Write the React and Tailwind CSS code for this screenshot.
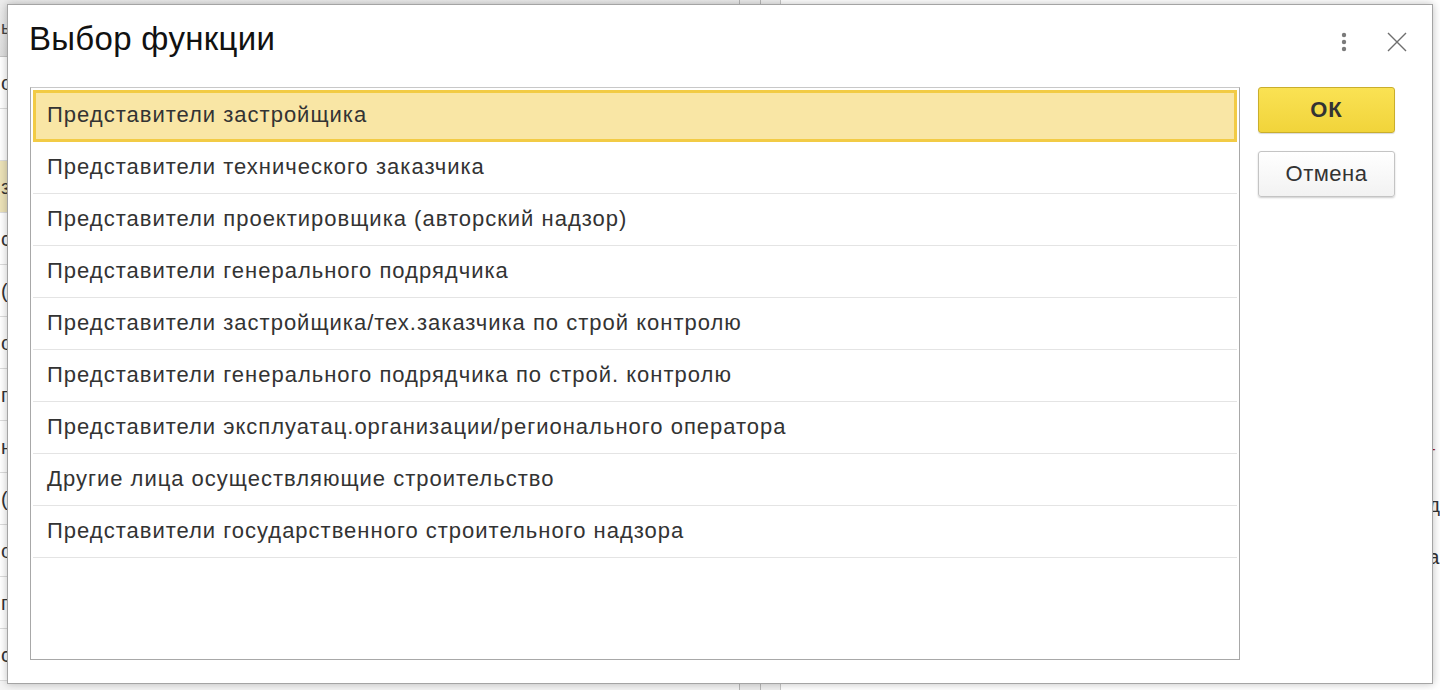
import { useState } from 'react'

const functions = [
  'Представители застройщика',
  'Представители технического заказчика',
  'Представители проектировщика (авторский надзор)',
  'Представители генерального подрядчика',
  'Представители застройщика/тех.заказчика по строй контролю',
  'Представители генерального подрядчика по строй. контролю',
  'Представители эксплуатац.организации/регионального оператора',
  'Другие лица осуществляющие строительство',
  'Представители государственного строительного надзора'
]

// fragments of the form behind the dialog, only their first letters peek out
const backRows = ['о', '', 'з', 'с', '(', 'о', 'г', 'н', '(', 'о', 'г', 'с']
const rightRows = [
  { text: 'г', red: true },
  { text: 'д', red: false },
  { text: 'а', red: false }
]

const Background = () => (
  <div className="flex h-[690px] w-[1440px] bg-[#f4f4f4]">
    <div className="flex w-[744px] flex-col border-r border-[#b8b8b8]">
      <div className="flex h-[57px] items-center border-b border-[#c4c4c4] bg-gradient-to-b from-[#ececec] to-[#dedede] pl-[1px] text-[18px] text-[#444]">
        ыы
      </div>
      {backRows.map((t, i) => (
        <div
          key={i}
          className={
            'flex h-[52px] items-center border-b border-[#dcdcdc] pl-[1px] text-[20px] text-[#333] ' +
            (i === 2 ? 'bg-[#ece2b8]' : 'bg-white')
          }
        >
          {t}
        </div>
      ))}
    </div>
    <div className="w-[22px] border-r border-[#b8b8b8] bg-[#ececec]"></div>
    <div className="w-[20px] border-r border-[#c8c8c8] bg-[#f0f0f0]"></div>
    <div className="flex flex-1 flex-col bg-white pt-[438px] pl-[647px]">
      {rightRows.map((r) => (
        <div
          key={r.text}
          className={'h-[52px] text-[20px] ' + (r.red ? 'text-[#a02020]' : 'text-[#333]')}
        >
          {r.text}
        </div>
      ))}
    </div>
  </div>
)

const Kebab = () => (
  <svg width="8" height="22" viewBox="0 0 8 22">
    <circle cx="4" cy="4" r="2.2" fill="#7a7a7a" />
    <circle cx="4" cy="11" r="2.2" fill="#7a7a7a" />
    <circle cx="4" cy="18" r="2.2" fill="#7a7a7a" />
  </svg>
)

const Close = () => (
  <svg width="20" height="20" viewBox="0 0 20 20">
    <path d="M1 1 L19 19 M19 1 L1 19" stroke="#6e6e6e" strokeWidth="1.4" fill="none" />
  </svg>
)

const App = () => {
  const [selected, setSelected] = useState(0)

  return (
    <div className="relative h-[690px] w-[1440px] overflow-hidden font-['Liberation_Sans',Arial,sans-serif]">
      <Background />

      {/* Dialog */}
      <div className="absolute top-[4px] left-[7px] flex h-[680px] w-[1426px] flex-col border border-[#a4a4a4] bg-white shadow-[0_0_8px_rgba(0,0,0,0.25)]">
        <div className="flex h-[82px] items-start justify-between pt-[15px] pl-[21px] pr-[24px]">
          <h1 className="text-[33px] leading-[38px] tracking-[0.3px] text-[#111]">Выбор функции</h1>
          <div className="flex items-center gap-[37px] pt-[10px]">
            <button className="flex h-[24px] w-[10px] items-center justify-center">
              <Kebab />
            </button>
            <button className="flex h-[22px] w-[22px] items-center justify-center">
              <Close />
            </button>
          </div>
        </div>

        <div className="flex flex-1 gap-[18px] pl-[22px] pr-[37px] pb-[23px]">
          {/* List */}
          <div className="flex flex-1 flex-col border border-[#a8a8a8] border-t-[#c8c8c8] p-[2px]">
            {functions.map((name, i) => (
              <div
                key={name}
                onClick={() => setSelected(i)}
                className={
                  selected === i
                    ? 'flex h-[52px] items-center border-[3px] border-[#f2cb45] bg-[#f9e6a5] pl-[11px] pb-[3px] text-[22px] tracking-[1px] text-[#333]'
                    : 'flex h-[52px] items-center border-b border-[#e4e4e4] pl-[14px] pb-[3px] text-[22px] tracking-[1px] text-[#333]'
                }
              >
                {name}
              </div>
            ))}
          </div>

          {/* Buttons */}
          <div className="flex w-[137px] flex-col gap-[18px]">
            <button className="h-[46px] rounded-[3px] border border-[#c9ae2c] bg-gradient-to-b from-[#fae253] to-[#f1d43a] pb-[2px] text-[22px] font-bold tracking-[1px] text-[#333] shadow-[0_1px_1px_rgba(0,0,0,0.15)]">
              ОК
            </button>
            <button className="h-[46px] rounded-[3px] border border-[#c4c4c4] bg-gradient-to-b from-white to-[#f2f2f2] pb-[2px] text-[22px] tracking-[0.5px] text-[#333] shadow-[0_1px_2px_rgba(0,0,0,0.2)]">
              Отмена
            </button>
          </div>
        </div>
      </div>
    </div>
  )
}

export default App
